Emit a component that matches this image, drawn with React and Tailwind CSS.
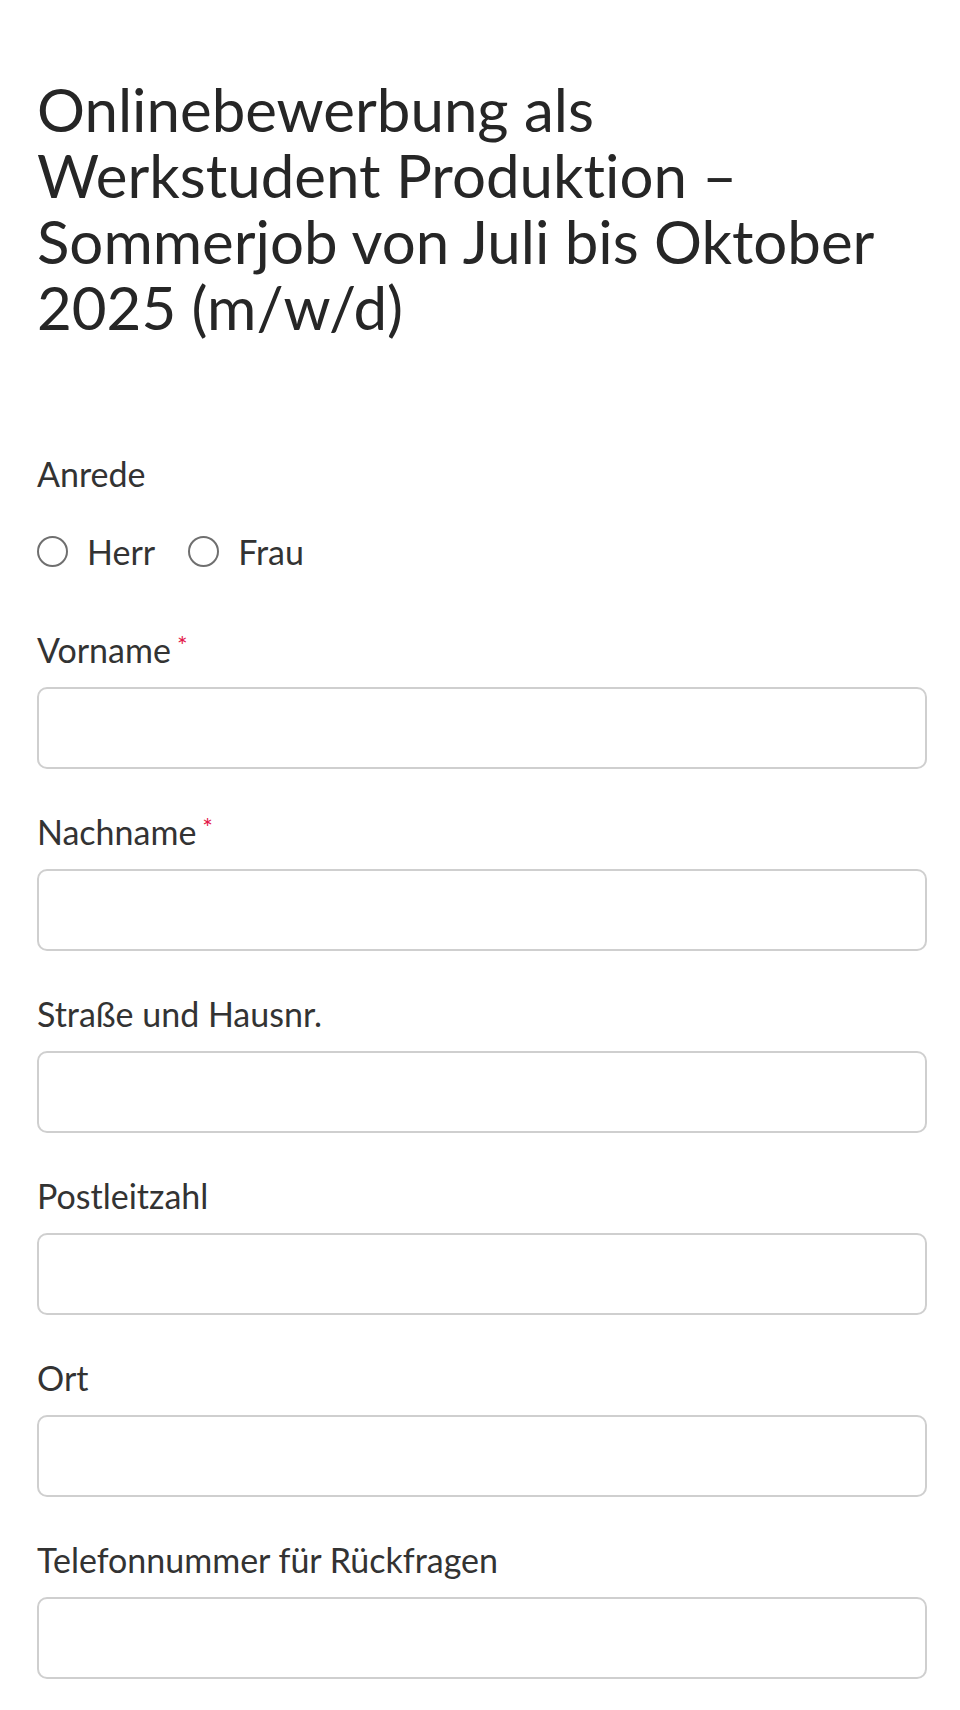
import { useState } from 'react'

const fields = [
  { label: 'Vorname', required: true },
  { label: 'Nachname', required: true },
  { label: 'Straße und Hausnr.' },
  { label: 'Postleitzahl' },
  { label: 'Ort' },
  { label: 'Telefonnummer für Rückfragen' },
]

function Radio({ label, checked, onChange }) {
  return (
    <label className="flex items-center gap-[19px] cursor-pointer">
      <input type="radio" name="anrede" checked={checked} onChange={onChange} className="sr-only" />
      <span className="w-[31px] h-[31px] rounded-full border-2 border-[#6f6f6f] bg-white flex items-center justify-center">
        {checked && <span className="w-[15px] h-[15px] rounded-full bg-[#333]" />}
      </span>
      <span>{label}</span>
    </label>
  )
}

export default function App() {
  const [anrede, setAnrede] = useState('')

  return (
    <div className="min-h-screen bg-white text-[#333] pl-[37px] pr-[33px] pt-[76px] pb-[30px] [font-variant-ligatures:none]" style={{ fontFamily: 'Lato, "Open Sans", sans-serif' }}>
      <h1 className="text-[60px] leading-[66px] text-[#262626] font-normal">
        Onlinebewerbung als Werkstudent Produktion – Sommerjob von Juli bis Oktober 2025 (m/w/d)
      </h1>

      <form className="mt-[113px] text-[34px] leading-[41px]">
        <p>Anrede</p>
        <div className="flex items-center gap-[33px] mt-[37px]">
          <Radio label="Herr" checked={anrede === 'herr'} onChange={() => setAnrede('herr')} />
          <Radio label="Frau" checked={anrede === 'frau'} onChange={() => setAnrede('frau')} />
        </div>

        <div className="mt-[57px] flex flex-col gap-[42px]">
          {fields.map(f => (
            <div key={f.label}>
              <label className="block h-[41px]">
                {f.label}
                {f.required && <span className="relative -top-[8px] ml-[6px] text-[25px] leading-none text-[#e3184a]">*</span>}
              </label>
              <input
                type="text"
                className="block w-full h-[82px] mt-[17px] border-2 border-[#cfcfcf] rounded-[10px] bg-white px-4 text-[34px] focus:outline-none"
              />
            </div>
          ))}
        </div>
      </form>
    </div>
  )
}
